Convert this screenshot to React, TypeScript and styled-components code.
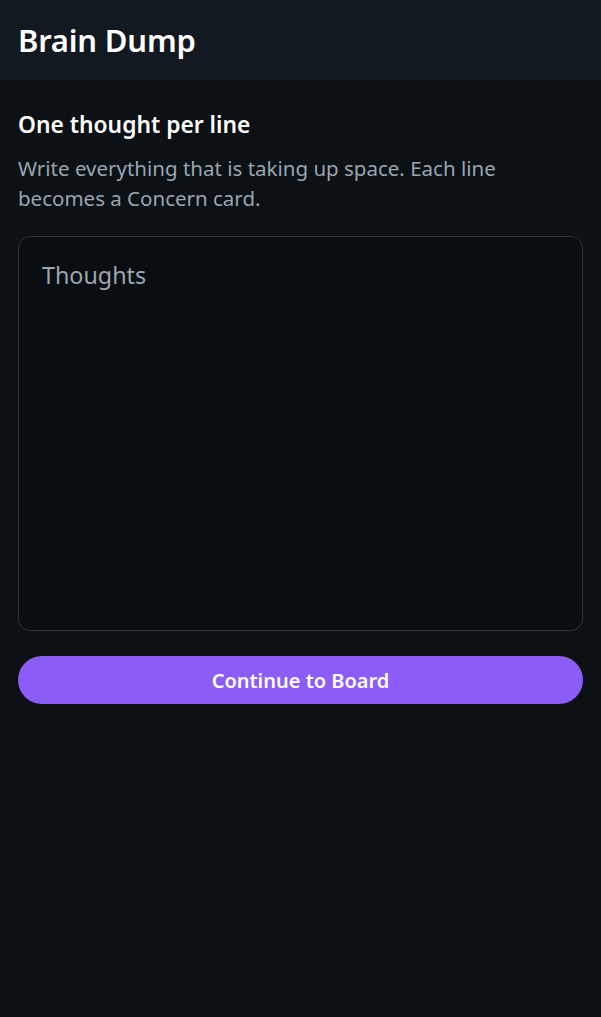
import styled, { createGlobalStyle } from 'styled-components';

const GlobalStyle = createGlobalStyle`
  html, body {
    margin: 0;
    padding: 0;
    background: #0c1115;
  }
  body {
    font-family: "Noto Sans", "Open Sans", sans-serif;
    -webkit-font-smoothing: antialiased;
  }
  * {
    box-sizing: border-box;
  }
`;

export default function App() {
  return (
    <Page>
      <GlobalStyle />
      <Header>
        <Title>Brain Dump</Title>
      </Header>
      <Main>
        <Heading>One thought per line</Heading>
        <Hint>
          Write everything that is taking up space. Each line becomes a Concern card.
        </Hint>
        <Thoughts placeholder="Thoughts" />
        <PrimaryButton type="button">Continue to Board</PrimaryButton>
      </Main>
    </Page>
  );
}

const Page = styled.div`
  min-height: 100vh;
  background: #0c1115;
  color: #f3f5f7;
`;

const Header = styled.header`
  display: flex;
  align-items: center;
  height: 80px;
  padding: 0 18px;
  background: #121920;
`;

const Title = styled.h1`
  margin: 0;
  font-size: 31px;
  font-weight: 600;
  color: #ffffff;
  letter-spacing: -0.2px;
`;

const Main = styled.main`
  display: flex;
  flex-direction: column;
  padding: 31px 18px;
`;

const Heading = styled.h2`
  margin: 0;
  font-size: 22.8px;
  line-height: 28px;
  font-weight: 600;
  color: #ffffff;
`;

const Hint = styled.p`
  max-width: 540px;
  margin: 14px 0 0;
  font-size: 20.5px;
  line-height: 30px;
  color: #9aa5b1;
`;

const Thoughts = styled.textarea`
  margin-top: 23px;
  height: 395px;
  padding: 22px 23px;
  background: #0a0e12;
  border: 1.5px solid #2a343d;
  border-radius: 12px;
  resize: none;
  font-family: inherit;
  font-size: 23.3px;
  line-height: 32px;
  color: #e6eaee;
  outline: none;

  &::placeholder {
    color: #9ba6b1;
  }
`;

const PrimaryButton = styled.button`
  margin-top: 25px;
  height: 48px;
  padding-top: 2px;
  border: none;
  border-radius: 24px;
  background: #8b5cf6;
  color: #ffffff;
  font-family: inherit;
  font-size: 20px;
  font-weight: 600;
  cursor: pointer;
`;
